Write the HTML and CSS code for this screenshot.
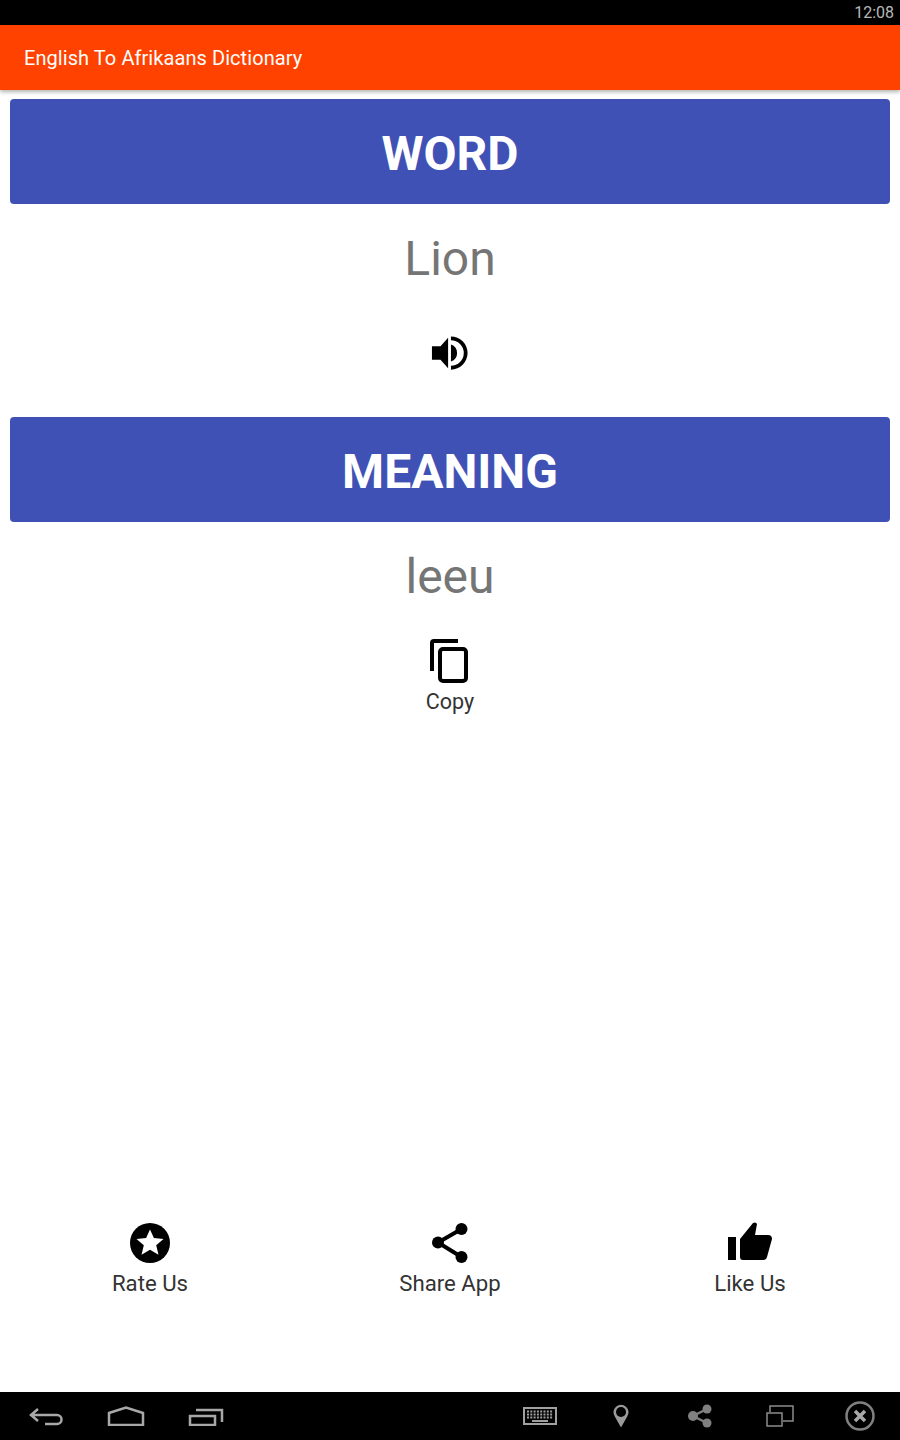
FILE: index.html
```html
<!DOCTYPE html>
<html lang="en">
<head>
  <meta charset="UTF-8" />
  <title>English To Afrikaans Dictionary</title>
  <link rel="stylesheet" href="styles.css">
</head>
<body>
  <div class="status-bar">12:08</div>
  <header class="app-bar">English To Afrikaans Dictionary</header>

  <main class="content">
    <div class="banner">WORD</div>
    <div class="value">Lion</div>
    <button class="speak">
      <svg width="38" height="38" viewBox="0 0 40 40">
        <path d="M1 13h9l8-9v32l-8-9H1z" fill="#000"/>
        <path d="M21 11a9.500 9.500 0 0 1 0 18z" fill="#000"/>
        <path d="M21 2.500a17.500 17.500 0 0 1 0 35v-4a13.500 13.500 0 0 0 0-27z" fill="#000"/>
      </svg>
    </button>

    <div class="banner banner-meaning">MEANING</div>
    <div class="value">leeu</div>
    <div class="action copy">
      <svg width="40" height="46" viewBox="0 0 40 46">
        <path d="M28 1H4a4 4 0 0 0-4 4v28h4V5h24z" fill="#000"/>
        <rect x="10" y="11" width="26" height="32" rx="3" fill="none" stroke="#000" stroke-width="4"/>
      </svg>
      <span>Copy</span>
    </div>
  </main>

  <section class="bottom-actions">
    <div class="action">
      <svg width="42" height="42" viewBox="0 0 42 42">
        <circle cx="21" cy="21" r="20" fill="#000"/>
        <path d="M21 7.500l3.900 8.600 9.600.9-7.300 6.300 2.300 9.400-8.500-5-8.500 5 2.300-9.400-7.300-6.300 9.600-.9z" fill="#fff"/>
      </svg>
      <span>Rate Us</span>
    </div>
    <div class="action">
      <svg width="42" height="42" viewBox="0 0 42 42">
        <path d="M32.500 7L9 20.500 32.500 35" fill="none" stroke="#000" stroke-width="4"/>
        <circle cx="9" cy="20.500" r="6" fill="#000"/>
        <circle cx="32.500" cy="7" r="6" fill="#000"/>
        <circle cx="32.500" cy="35" r="6" fill="#000"/>
      </svg>
      <span>Share App</span>
    </div>
    <div class="action">
      <svg width="48" height="42" viewBox="0 0 48 42">
        <rect x="2" y="15" width="8" height="23" fill="#000"/>
        <path d="M17 38a3 3 0 0 1-3-3V17L27 1q3-1.500 4 1l-2 11h13a4 4 0 0 1 4 4l-5 18a4 4 0 0 1-4 3z" fill="#000"/>
      </svg>
      <span>Like Us</span>
    </div>
  </section>

  <footer class="nav-bar">
    <div class="nav-group">
      <div class="nav-item">
        <svg width="36" height="20" viewBox="0 0 36 20">
          <path d="M10 3L3 9l7 6M3 9h26a4.500 4.500 0 0 1 0 9H17" fill="none" stroke="#a8a8a8" stroke-width="2.500"/>
        </svg>
      </div>
      <div class="nav-item">
        <svg width="38" height="20" viewBox="0 0 38 20">
          <path d="M2 19V7L19 1.500 36 7v12z" fill="none" stroke="#a8a8a8" stroke-width="2.500"/>
        </svg>
      </div>
      <div class="nav-item">
        <svg width="36" height="20" viewBox="0 0 36 20">
          <rect x="2" y="10" width="25" height="9" fill="none" stroke="#a8a8a8" stroke-width="2.500"/>
          <path d="M8 4h26v12" fill="none" stroke="#a8a8a8" stroke-width="2.500"/>
        </svg>
      </div>
    </div>
    <div class="nav-group">
      <div class="nav-item">
        <svg width="34" height="18" viewBox="0 0 34 18">
          <rect x="1" y="1" width="32" height="16" fill="none" stroke="#a0a0a0" stroke-width="2"/>
          <path d="M4 4.500h26M4 7.500h26M4 10.500h26" stroke="#a0a0a0" stroke-width="2" stroke-dasharray="2 1.300"/>
          <path d="M9 14h16" stroke="#a0a0a0" stroke-width="2"/>
        </svg>
      </div>
      <div class="nav-item">
        <svg class="pin" width="16" height="24" viewBox="0 0 16 24">
          <path d="M8 23.500L1.800 12.500a7.500 7.500 0 1 1 12.400 0z" fill="#9a9a9a"/>
          <circle cx="8" cy="8" r="5" fill="#000"/>
        </svg>
      </div>
      <div class="nav-item">
        <svg width="24" height="24" viewBox="0 0 24 24">
          <path d="M19 5L5 12l14 7" fill="none" stroke="#808080" stroke-width="2.500"/>
          <circle cx="5" cy="12" r="5" fill="#808080"/>
          <circle cx="19" cy="5" r="4.500" fill="#808080"/>
          <circle cx="19" cy="19" r="4.500" fill="#808080"/>
        </svg>
      </div>
      <div class="nav-item">
        <svg width="28" height="22" viewBox="0 0 28 22">
          <path d="M4 7V1h23v15h-10" fill="none" stroke="#8c8c8c" stroke-width="1.500"/>
          <rect x="1" y="8" width="15" height="13" fill="none" stroke="#8c8c8c" stroke-width="1.500"/>
        </svg>
      </div>
      <div class="nav-item">
        <svg width="30" height="30" viewBox="0 0 30 30">
          <circle cx="15" cy="15" r="13.500" fill="none" stroke="#808080" stroke-width="2.500"/>
          <path d="M10 10l10 10M20 10L10 20" stroke="#a8a8a8" stroke-width="3.500"/>
        </svg>
      </div>
    </div>
  </footer>
</body>
</html>
```

FILE: styles.css
```css
* {
  box-sizing: border-box;
}

body {
  font-family: Roboto, sans-serif;
  background-color: #fff;
  margin: 0;
  height: 1440px;
  display: flex;
  flex-direction: column;
  overflow: hidden;
}

.status-bar {
  height: 25px;
  background-color: #000;
  color: #b8b8b8;
  font-size: 16px;
  line-height: 25px;
  text-align: right;
  padding-right: 6px;
}

.app-bar {
  height: 65px;
  background-color: #ff4200;
  color: #fff;
  font-size: 20px;
  letter-spacing: 0.07px;
  line-height: 66px;
  padding-left: 24px;
  box-shadow: 0 2px 4px rgba(0, 0, 0, 0.3);
  position: relative;
}

.content {
  flex: 1;
  padding: 9px 10px 0;
  display: flex;
  flex-direction: column;
  align-items: center;
}

.banner {
  width: 100%;
  height: 105px;
  background-color: #3f51b5;
  color: #fff;
  font-size: 48px;
  font-weight: 700;
  line-height: 109px;
  text-align: center;
  border-radius: 4px;
}

.banner-meaning {
  margin-top: 45px;
}

.value {
  color: #757575;
  font-size: 48px;
  line-height: 56px;
  margin-top: 27px;
}

.speak {
  display: block;
  background: none;
  border: none;
  padding: 0;
  height: 38px;
  margin-top: 47px;
}

.action {
  display: flex;
  flex-direction: column;
  align-items: center;
  color: #333;
  font-size: 22.2px;
  line-height: 26px;
  gap: 6px;
}

.copy {
  margin-top: 33px;
  gap: 5px;
}

.copy span {
  font-size: 21.5px;
}

.bottom-actions {
  display: grid;
  grid-template-columns: repeat(3, 1fr);
  height: 170px;
}

.nav-bar {
  height: 48px;
  background-color: #000;
  display: flex;
  justify-content: space-between;
  align-items: center;
  padding-left: 6px;
}

.nav-group {
  display: flex;
  align-items: center;
}

.nav-item {
  width: 80px;
  display: flex;
  justify-content: center;
}

.pin {
  margin-left: 2px;
}
```
